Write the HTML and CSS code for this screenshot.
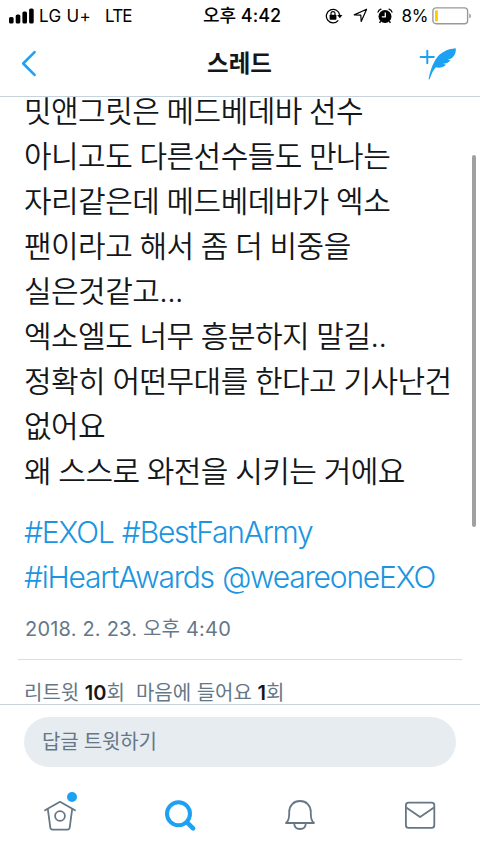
FILE: index.html
```html
<!DOCTYPE html>
<html lang="ko">
<head>
    <meta charset="utf-8">
    <title>스레드</title>
    <link rel="stylesheet" href="styles.css">
</head>
<body>

    <!-- 상태 표시줄 -->
    <div class="status-bar">
        <div class="status-left">
            <svg class="signal" width="26" height="16" viewBox="0 0 26 16">
                <rect x="0" y="9" width="4.6" height="6.5" rx="1.6"/>
                <rect x="6.7" y="6.5" width="4.6" height="9" rx="1.6"/>
                <rect x="13.4" y="3.5" width="4.6" height="12" rx="1.6"/>
                <rect x="20.1" y="0.5" width="4.6" height="15" rx="1.6"/>
            </svg>
            <span class="carrier">LG U+</span>
            <span class="network">LTE</span>
        </div>
        <div class="clock">오후 4:42</div>
        <div class="status-right">
            <svg class="lock" width="18" height="16" viewBox="0 0 18 16">
                <path d="M13.3 12.3A6.7 6.7 0 1 1 14.7 7.2" fill="none" stroke="#000" stroke-width="1.3"/>
                <path d="M12.2 6.9h5.2l-2.6 3.4z"/>
                <rect x="4.6" y="6.8" width="6.8" height="4.9" rx="0.7"/>
                <path d="M6 7V5.6a2 2 0 0 1 4 0V7" fill="none" stroke="#000" stroke-width="1.1"/>
            </svg>
            <svg class="location" width="15" height="15" viewBox="0 0 15 15">
                <path d="M1.2 6.9L13.6 1.2L8.2 13.5L7.8 7.2Z" fill="none" stroke="#000" stroke-width="1.2" stroke-linejoin="round"/>
            </svg>
            <svg class="alarm" width="16" height="16" viewBox="0 0 16 16">
                <circle cx="8" cy="8.5" r="6.5"/>
                <path d="M1 4.2Q1.6 1.9 4 1.2M12 1.2Q14.4 1.9 15 4.2" fill="none" stroke="#000" stroke-width="1.2" stroke-linecap="round"/>
                <path d="M3.7 13.2L2.6 14.8M12.3 13.2l1.1 1.6" stroke="#000" stroke-width="1.4"/>
                <path d="M8.3 4.6V8.9H4.8" fill="none" stroke="#fff" stroke-width="1.3"/>
            </svg>
            <span class="percent">8%</span>
            <svg class="battery" width="40" height="18" viewBox="0 0 40 18">
                <rect x="0.9" y="0.9" width="34.7" height="15.9" rx="3.2" fill="none" stroke="#999" stroke-width="1.4"/>
                <rect x="3" y="3.2" width="2.9" height="11.4" rx="0.8" fill="#ffcc00"/>
                <path d="M37.3 6.5q1.7 0.6 1.7 2.4t-1.7 2.4z" fill="#999"/>
            </svg>
        </div>
    </div>

    <!-- 상단 바 -->
    <header class="nav-bar">
        <svg class="back" width="16" height="28" viewBox="0 0 16 28">
            <path d="M13.6 2.2L2.2 13.5L13.6 24.8" fill="none" stroke="#1da1f2" stroke-width="2.6" stroke-linecap="round" stroke-linejoin="round"/>
        </svg>
        <h1 class="nav-title">스레드</h1>
        <svg class="compose" width="38" height="34" viewBox="0 0 38 34">
            <path d="M8.3 3.7v12.6M1.6 10h13.2" fill="none" stroke="#1da1f2" stroke-width="2" stroke-linecap="round"/>
            <path d="M36.8 1.2C28 1.8 20.5 6 16.6 12.4C13.3 18 10.4 26 9.6 32.6C10.8 32.8 10.8 31.6 11.4 30C12.9 26.2 14.5 22.8 17 20.3C19.5 21.2 24.6 20.6 27.2 17.4C25.8 17.5 24.9 17.3 24.1 16.8C26.9 16.5 29.8 15.7 31.5 13.2C30.4 13.3 29.5 13.1 28.8 12.6C33.6 11.6 37.3 8 36.8 1.2Z" fill="#1da1f2"/>
        </svg>
    </header>

    <!-- 트윗 본문 -->
    <main class="thread">
        <p class="tweet">밋앤그릿은 메드베데바 선수<br>아니고도 다른선수들도 만나는<br>자리같은데 메드베데바가 엑소<br>팬이라고 해서 좀 더 비중을<br>실은것같고...<br>엑소엘도 너무 흥분하지 말길..<br>정확히 어떤무대를 한다고 기사난건<br>없어요<br>왜 스스로 와전을 시키는 거에요</p>
        <p class="tags">#EXOL #BestFanArmy<br>#iHeartAwards @weareoneEXO</p>
        <div class="date">2018. 2. 23. 오후 4:40</div>
        <div class="counts">
            <span>리트윗 <b>10</b>회</span>
            <span>마음에 들어요 <b>1</b>회</span>
        </div>
        <div class="scrollbar"></div>
    </main>

    <footer class="bottom">
        <div class="reply">답글 트윗하기</div>
        <nav class="tabs">
            <div class="tab">
                <svg width="34" height="34" viewBox="0 0 34 34" fill="none" stroke="#657786" stroke-width="1.8" stroke-linecap="round" stroke-linejoin="round">
                    <path d="M2 11.2L17 2.8L32 11.2"/>
                    <path d="M4.8 10L7.3 28.5Q7.6 30.7 9.6 30.7H24.4Q26.4 30.7 26.7 28.5L29.2 10"/>
                    <circle cx="17" cy="17" r="4.9"/>
                </svg>
                <span class="dot"></span>
            </div>
            <div class="tab">
                <svg width="34" height="34" viewBox="0 0 34 34" fill="none" stroke="#1da1f2" stroke-linecap="round">
                    <circle cx="15.5" cy="14.8" r="11.5" stroke-width="4"/>
                    <path d="M24.2 23.6L30.1 29.4" stroke-width="4.6"/>
                </svg>
            </div>
            <div class="tab">
                <svg width="34" height="34" viewBox="0 0 34 34" fill="none" stroke="#657786" stroke-width="1.8" stroke-linecap="round" stroke-linejoin="round">
                    <path d="M3 24C5.4 22 6.2 19.2 6.2 15V13C6.2 6.5 10.7 2 17 2S27.8 6.5 27.8 13V15C27.8 19.2 28.6 22 31 24Z"/>
                    <path d="M11.2 24.2C11.2 27.9 13.6 30 17 30S22.8 27.9 22.8 24.2"/>
                </svg>
            </div>
            <div class="tab">
                <svg width="34" height="34" viewBox="0 0 34 34" fill="none" stroke="#657786" stroke-width="1.8" stroke-linejoin="round">
                    <rect x="2.9" y="3.7" width="28.4" height="25.2" rx="2.6"/>
                    <path d="M3.2 8.6L17.1 18.1L31 8.6"/>
                </svg>
            </div>
        </nav>
    </footer>

</body>
</html>
```
FILE: styles.css
```css
* {
    box-sizing: border-box;
}

body {
    margin: 0;
    width: 480px;
    height: 852px;
    display: flex;
    flex-direction: column;
    overflow: hidden;
    background: #fff;
    color: #14171a;
    font-family: "Inter", "Noto Sans CJK KR", sans-serif;
    white-space: nowrap;
}

svg {
    display: block;
    flex: none;
}

/* 상태 표시줄 */
.status-bar {
    display: grid;
    grid-template-columns: 1fr auto 1fr;
    align-items: center;
    height: 31px;
    padding: 0 8px 0 9px;
    color: #000;
    font-size: 17px;
}

.status-left,
.status-right {
    display: flex;
    align-items: center;
}

.status-right {
    justify-content: flex-end;
}

.carrier {
    margin-left: 4px;
    letter-spacing: 0.3px;
}

.network {
    margin-left: 14px;
    letter-spacing: -0.8px;
}

.clock {
    padding: 0 0 3px 3px;
    font-weight: 500;
    font-size: 18px;
}

.location {
    margin-left: 10px;
}

.alarm {
    margin-left: 9px;
}

.percent {
    margin: 0 4px 0 9px;
    letter-spacing: -0.4px;
}

/* 상단 바 */
.nav-bar {
    display: flex;
    align-items: center;
    justify-content: space-between;
    height: 66px;
    padding: 0 23px 0 21px;
    border-bottom: 1px solid #c6d2dc;
}

.nav-title {
    margin: 0 0 3px 23px;
    font-size: 23.5px;
    font-weight: 700;
}

/* 본문 */
.thread {
    position: relative;
    height: 607px;
    padding: 0 18px;
    overflow: hidden;
}

.tweet,
.tags {
    margin: 0 6px;
    font-size: 30px;
    font-weight: 300;
    line-height: 45px;
}

.tweet {
    margin-top: -8px;
    font-weight: 350;
    letter-spacing: -0.55px;
    word-spacing: -0.6px;
}

.tags {
    margin-top: 16px;
    color: #1b95e0;
    letter-spacing: -1.2px;
    word-spacing: 1px;
}

.date {
    margin-top: 12px;
    padding: 0 7px;
    height: 48px;
    border-bottom: 1px solid #d5dfe6;
    color: #657786;
    font-size: 20px;
    line-height: 34px;
    letter-spacing: 0.2px;
}

.counts {
    display: flex;
    gap: 11px;
    padding: 16px 6px 0;
    color: #657786;
    font-size: 20px;
    line-height: 34px;
}

.counts b {
    color: #14171a;
    font-weight: 600;
}

.scrollbar {
    position: absolute;
    top: 58px;
    right: 4px;
    width: 4px;
    height: 372px;
    border-radius: 2px;
    background: #a0a0a0;
}

/* 하단 */
.bottom {
    height: 148px;
    padding-top: 12px;
    border-top: 1px solid #c6d2dc;
    background: #fff;
}

.reply {
    margin: 0 24px;
    height: 50px;
    padding-left: 18px;
    border-radius: 25px;
    background: #e6ecf0;
    color: #657786;
    font-size: 20px;
    letter-spacing: -0.2px;
    line-height: 51px;
}

.tabs {
    display: flex;
    margin-top: 32px;
}

.tab {
    position: relative;
    flex: 1;
    display: flex;
    justify-content: center;
}

.dot {
    position: absolute;
    top: -7px;
    left: 67px;
    width: 10px;
    height: 10px;
    border-radius: 50%;
    background: #1da1f2;
}
```
